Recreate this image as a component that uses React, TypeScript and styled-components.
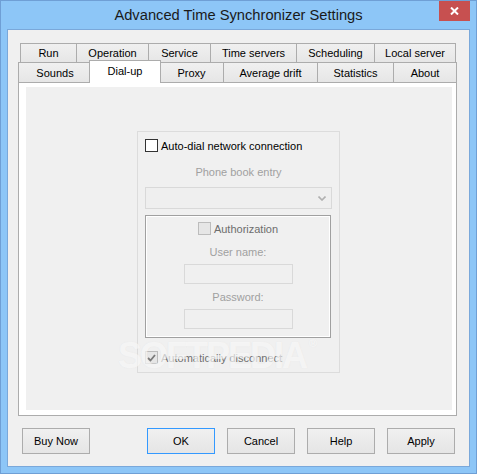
import React from "react"
import styled, { createGlobalStyle } from "styled-components"

const GlobalStyle = createGlobalStyle`
  html, body {
    margin: 0;
    padding: 0;
    background: #8dc6f7;
  }
  body {
    font-family: "Liberation Sans", Arial, sans-serif;
    font-size: 11px;
    color: #000;
  }
`

const Window = styled.div`
  width: 477px;
  height: 474px;
  box-sizing: border-box;
  border: 1px solid #6f9fd5;
  background: #8dc6f7;
  display: flex;
  flex-direction: column;
  padding: 0 6px 6px;
`

const TitleBar = styled.div`
  position: relative;
  height: 28px;
  display: flex;
  align-items: center;
  justify-content: center;
  font-size: 14.7px;
  color: #1a1a1a;
`

const CloseButton = styled.div`
  position: absolute;
  top: 0;
  right: 0;
  width: 31px;
  height: 20px;
  background: #c75050;
  display: flex;
  align-items: center;
  justify-content: center;
`

const Client = styled.div`
  flex: 1;
  border: 1px solid #7aa8da;
  background: #f0f0f0;
  display: flex;
  flex-direction: column;
  padding: 13px 12px 12px 10px;
`

const TabRow = styled.div<{ $left: number; $right: number; $height: number }>`
  display: flex;
  height: ${p => p.$height}px;
  margin: 0 ${p => p.$right}px 0 ${p => p.$left}px;
`

const Tab = styled.div<{ $w: number; $active?: boolean }>`
  box-sizing: border-box;
  width: ${p => p.$w}px;
  flex: none;
  border-top: 1px solid #acacac;
  border-left: 1px solid #acacac;
  &:last-child {
    border-right: 1px solid #acacac;
  }
  background: linear-gradient(#f0f0f0, #e6e6e6);
  display: flex;
  align-items: center;
  justify-content: center;
  white-space: nowrap;
  ${p =>
    p.$active &&
    `
    position: relative;
    z-index: 2;
    background: #fff;
    border-right: 1px solid #acacac;
    margin: -2px -2px -1px;
    width: ${p.$w + 4}px;
    padding-bottom: 2px;
  `}
`

const Page = styled.div`
  height: 334px;
  box-sizing: border-box;
  border: 1px solid #acacac;
  background: #fff;
  padding: 4px 4px 5px 7px;
  display: flex;
`

const Panel = styled.div`
  position: relative;
  flex: 1;
  background: #f0f0f0;
  display: flex;
  align-items: flex-start;
  padding: 44px 0 0 111px;
`

const GroupBox = styled.div`
  box-sizing: border-box;
  width: 203px;
  height: 242px;
  border: 1px solid #dcdcdc;
  padding: 7px 7px 0;
  display: flex;
  flex-direction: column;
`

const CheckRow = styled.div<{ $top?: number; $center?: boolean; $tone?: string }>`
  display: flex;
  align-items: center;
  height: 13px;
  gap: 3px;
  margin-top: ${p => p.$top ?? 0}px;
  justify-content: ${p => (p.$center ? "center" : "flex-start")};
  color: ${p => p.$tone ?? "#000"};
  white-space: nowrap;
`

const Box = styled.span<{ $disabled?: boolean }>`
  box-sizing: border-box;
  width: 13px;
  height: 13px;
  flex: none;
  border: 1px solid ${p => (p.$disabled ? "#bcbcbc" : "#333")};
  background: ${p => (p.$disabled ? "#e6e6e6" : "#fff")};
  display: flex;
  align-items: center;
  justify-content: center;
`

const Caption = styled.div<{ $top: number; $tone: string }>`
  height: 14px;
  line-height: 14px;
  margin-top: ${p => p.$top}px;
  text-align: center;
  color: ${p => p.$tone};
`

const Combo = styled.div`
  box-sizing: border-box;
  width: 187px;
  height: 22px;
  margin-top: 8px;
  border: 1px solid #d9d9d9;
  background: #efefef;
  display: flex;
  align-items: center;
  justify-content: flex-end;
  padding-right: 5px;
`

const AuthBox = styled.div`
  box-sizing: border-box;
  width: 186px;
  height: 123px;
  margin-top: 6px;
  border: 1px solid #a0a0a0;
  box-shadow: inset 0 0 0 1px #fff;
  display: flex;
  flex-direction: column;
  align-items: stretch;
  padding-top: 6px;
`

const Field = styled.div<{ $top: number }>`
  box-sizing: border-box;
  width: 109px;
  height: 20px;
  margin: ${p => p.$top}px auto 0;
  border: 1px solid #d9d9d9;
  background: #f0f0f0;
`

const Footer = styled.div`
  display: flex;
  gap: 12px;
  margin: 12px 2px 0 4px;
`

const Button = styled.button<{ $default?: boolean }>`
  box-sizing: border-box;
  width: 68px;
  height: 26px;
  padding: 0;
  border: 1px solid ${p => (p.$default ? "#3399ff" : "#acacac")};
  background: linear-gradient(#f0f0f0, #e5e5e5);
  font-family: "Liberation Sans", Arial, sans-serif;
  font-size: 11px;
  color: #000;
  &:first-child {
    margin-right: auto;
  }
`

const Watermark = styled.div`
  position: absolute;
  left: 92px;
  top: 251px;
  font-size: 36px;
  font-weight: bold;
  letter-spacing: -2px;
  line-height: 1;
  color: rgba(255, 255, 255, 0.6);
  text-shadow: 0 0 1px rgba(200, 200, 200, 0.25);
  pointer-events: none;
  sup {
    font-size: 11px;
    vertical-align: top;
    margin-left: 3px;
  }
`

const Check = () => (
  <svg width="9" height="8" viewBox="0 0 9 8">
    <path d="M1 4 L3.5 6.5 L8 1" fill="none" stroke="#7a7a7a" strokeWidth="1.8" />
  </svg>
)

const Chevron = () => (
  <svg width="8" height="5" viewBox="0 0 8 5">
    <path d="M0.5 0.5 L4 4 L7.5 0.5" fill="none" stroke="#b0b0b0" strokeWidth="1.6" />
  </svg>
)

const rowOne = [
  { label: "Run", w: 56 },
  { label: "Operation", w: 72 },
  { label: "Service", w: 62 },
  { label: "Time servers", w: 86 },
  { label: "Scheduling", w: 78 },
  { label: "Local server", w: 82 },
]

const rowTwo = [
  { label: "Sounds", w: 73 },
  { label: "Dial-up", w: 68, active: true },
  { label: "Proxy", w: 64 },
  { label: "Average drift", w: 94 },
  { label: "Statistics", w: 76 },
  { label: "About", w: 64 },
]

const App = () => {
  return (
    <>
      <GlobalStyle />
      <Window>
        <TitleBar>
          Advanced Time Synchronizer Settings
          <CloseButton>
            <svg width="9" height="8" viewBox="0 0 9 8">
              <path d="M1 0.5 L8 7.5 M8 0.5 L1 7.5" stroke="#fff" strokeWidth="2" />
            </svg>
          </CloseButton>
        </TitleBar>
        <Client>
          <TabRow $left={2} $right={1} $height={19}>
            {rowOne.map(t => (
              <Tab key={t.label} $w={t.w}>{t.label}</Tab>
            ))}
          </TabRow>
          <TabRow $left={0} $right={0} $height={20}>
            {rowTwo.map(t => (
              <Tab key={t.label} $w={t.w} $active={t.active}>{t.label}</Tab>
            ))}
          </TabRow>
          <Page>
            <Panel>
              <GroupBox>
                <CheckRow>
                  <Box />
                  Auto-dial network connection
                </CheckRow>
                <Caption $top={13} $tone="#a0a0a0">Phone book entry</Caption>
                <Combo>
                  <Chevron />
                </Combo>
                <AuthBox>
                  <CheckRow $center $tone="#6d6d6d">
                    <Box $disabled />
                    Authorization
                  </CheckRow>
                  <Caption $top={10} $tone="#a0a0a0">User name:</Caption>
                  <Field $top={5} />
                  <Caption $top={6} $tone="#a0a0a0">Password:</Caption>
                  <Field $top={5} />
                </AuthBox>
                <CheckRow $top={13} $tone="#6d6d6d">
                  <Box $disabled>
                    <Check />
                  </Box>
                  Automatically disconnect
                </CheckRow>
              </GroupBox>
              <Watermark>
                SOFTPEDIA<sup>®</sup>
              </Watermark>
            </Panel>
          </Page>
          <Footer>
            <Button>Buy Now</Button>
            <Button $default>OK</Button>
            <Button>Cancel</Button>
            <Button>Help</Button>
            <Button>Apply</Button>
          </Footer>
        </Client>
      </Window>
    </>
  )
}

export default App
